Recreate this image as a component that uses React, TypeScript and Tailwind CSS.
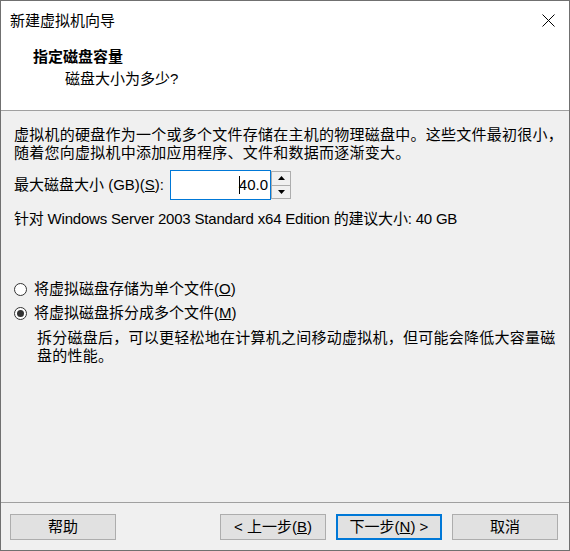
import React from "react";

const font = { fontFamily: '"Liberation Sans", "Noto Sans CJK SC", sans-serif' };

function Radio({ checked }: { checked?: boolean }) {
  return (
    <span className="relative inline-flex h-[13px] w-[13px] shrink-0 items-center justify-center rounded-full border border-[#333333] bg-white">
      {checked && <span className="h-[7px] w-[7px] rounded-full bg-[#333333]" />}
    </span>
  );
}

function Btn({ children, primary }: { children: React.ReactNode; primary?: boolean }) {
  return (
    <div
      className={
        "flex h-[26px] w-[106px] items-center justify-center bg-[#e1e1e1] text-[15px] leading-[18px] text-black " +
        (primary ? "border-2 border-[#0078d7]" : "border border-[#adadad]")
      }
    >
      {children}
    </div>
  );
}

export default function App() {
  return (
    <div
      style={font}
      className="flex h-[551px] w-[570px] flex-col border border-[#707070] bg-[#f0f0f0] text-[15px] text-black"
    >
      {/* Title + header (white) */}
      <div className="bg-white">
        <div className="flex h-[38px] items-center justify-between pl-[9px] pr-[14px]">
          <span className="leading-[19px]">新建虚拟机向导</span>
          <svg width="13" height="13" viewBox="0 0 13 13">
            <path d="M0.5 0.5 L12.5 12.5 M12.5 0.5 L0.5 12.5" stroke="#000" strokeWidth="1" />
          </svg>
        </div>
        <div className="h-[71px] pl-[32px] pt-[8px]">
          <div className="font-bold leading-[19px]">指定磁盘容量</div>
          <div className="pl-[32px] pt-[3px] leading-[19px]">磁盘大小为多少?</div>
        </div>
      </div>
      <div className="h-px bg-[#a0a0a0]" />

      {/* Body */}
      <div className="flex flex-1 flex-col pl-[13px] pt-[15px]">
        <p className="whitespace-nowrap leading-[18px] tracking-[0.25px]">
          虚拟机的硬盘作为一个或多个文件存储在主机的物理磁盘中。这些文件最初很小，
          <br />
          随着您向虚拟机中添加应用程序、文件和数据而逐渐变大。
        </p>

        <div className="mt-[8px] flex h-[30px] items-center">
          <span className="w-[156px] whitespace-nowrap leading-[18px]">
            最大磁盘大小 (GB)(<span className="underline">S</span>):
          </span>
          <div className="relative flex h-[30px] w-[101px] items-center justify-end border border-[#0078d7] bg-white pr-[2px]">
            <span className="relative leading-[18px]">
              <span className="absolute left-[0px] top-[0px] h-[18px] w-px bg-black" />
              40.0
            </span>
          </div>
          <div className="flex h-[28px] w-[20px] flex-col border border-[#adadad] bg-[#f0f0f0]">
            <div className="flex flex-1 items-center justify-center border-b border-[#adadad]">
              <svg width="7" height="4" viewBox="0 0 7 4">
                <path d="M0 4 L3.5 0 L7 4 Z" fill="#000" />
              </svg>
            </div>
            <div className="flex flex-1 items-center justify-center">
              <svg width="7" height="4" viewBox="0 0 7 4">
                <path d="M0 0 L7 0 L3.5 4 Z" fill="#000" />
              </svg>
            </div>
          </div>
        </div>

        <p className="mt-[10px] whitespace-nowrap leading-[18px] tracking-[-0.2px]">
          针对 Windows Server 2003 Standard x64 Edition 的建议大小: 40 GB
        </p>

        <div className="mt-[52px] flex h-[18px] items-center gap-[7px]">
          <Radio />
          <span className="leading-[18px]">
            将虚拟磁盘存储为单个文件(<span className="underline">O</span>)
          </span>
        </div>
        <div className="mt-[6px] flex h-[18px] items-center gap-[7px]">
          <Radio checked />
          <span className="leading-[18px]">
            将虚拟磁盘拆分成多个文件(<span className="underline">M</span>)
          </span>
        </div>
        <p className="mt-[7px] whitespace-nowrap pl-[23px] leading-[18px] tracking-[0.25px]">
          拆分磁盘后，可以更轻松地在计算机之间移动虚拟机，但可能会降低大容量磁
          <br />
          盘的性能。
        </p>
      </div>

      {/* Footer */}
      <div className="h-px bg-[#a0a0a0]" />
      <div className="flex h-[47px] items-start pl-[9px] pt-[11px]">
        <Btn>帮助</Btn>
        <div className="ml-[104px] flex gap-[10px]">
          <Btn>
            &lt; 上一步(<span className="underline">B</span>)
          </Btn>
          <Btn primary>
            下一步(<span className="underline">N</span>) &gt;
          </Btn>
          <Btn>取消</Btn>
        </div>
      </div>
    </div>
  );
}
